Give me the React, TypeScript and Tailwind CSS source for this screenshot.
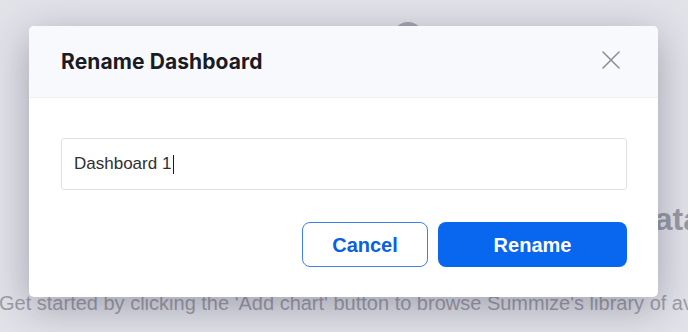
import React from "react";

const RenameDashboard = () => {
  return (
    <div className="relative h-[332px] w-[688px] overflow-hidden bg-[#e2e2e9] font-['Liberation_Sans',Arial,sans-serif]">
      {/* page behind the overlay */}
      <div className="flex flex-col pt-[22px]">
        <div className="ml-[392px] h-8 w-8 rounded-full bg-[#a4a4b0]" />
        <div className="mt-[149px] flex w-[701px] justify-end">
          <h2 className="whitespace-nowrap text-[32px] font-bold leading-none text-[#9a9aa4]">
            Your dashboard has no data
          </h2>
        </div>
        <p className="ml-[-1px] mt-[56px] whitespace-nowrap text-[20px] leading-[24px] text-[#9d9da6]">
          Get started by clicking the 'Add chart' button to browse Summize's library of available charts.
        </p>
      </div>

      {/* modal */}
      <div className="absolute inset-0 flex items-start pl-[29px] pt-[26px]">
        <div className="w-[629px] overflow-hidden rounded-[5px] bg-white shadow-[0_10px_40px_rgba(40,40,70,0.35)]">
          <div className="flex h-[72px] items-center justify-between border-b border-[#edeff4] bg-[#f8f9fc] pl-8 pr-[35px]">
            <h1 className="pt-[1px] font-['Inter',sans-serif] text-[21px] font-bold tracking-[0.1px] text-[#1b1b24]">
              Rename Dashboard
            </h1>
            <button className="mt-[-3px] flex h-6 w-6 items-center justify-center">
              <svg width="24" height="24" viewBox="0 0 24 24" fill="none">
                <path d="M4 4L20 20M20 4L4 20" stroke="#8e8e99" strokeWidth="1.6" strokeLinecap="round" />
              </svg>
            </button>
          </div>

          <div className="pb-[30px] pl-8 pr-[31px] pt-10">
            <div className="flex h-[52px] items-center rounded-[3px] border border-[#e1e1e6] px-3">
              <span className="text-[17px] text-[#2f2f33]">Dashboard 1</span>
              <span className="ml-[2px] h-[19px] w-px bg-[#1a1a1a]" />
            </div>

            <div className="mt-8 flex justify-end gap-[10px]">
              <button className="h-[45px] w-[126px] rounded-lg border border-[#3f80ea] bg-white text-[20px] font-bold text-[#0b5fe0]">
                Cancel
              </button>
              <button className="h-[45px] w-[189px] rounded-lg bg-[#0866ef] text-[20px] font-bold text-white">
                Rename
              </button>
            </div>
          </div>
        </div>
      </div>
    </div>
  );
};

export default function App() {
  return <RenameDashboard />;
}
